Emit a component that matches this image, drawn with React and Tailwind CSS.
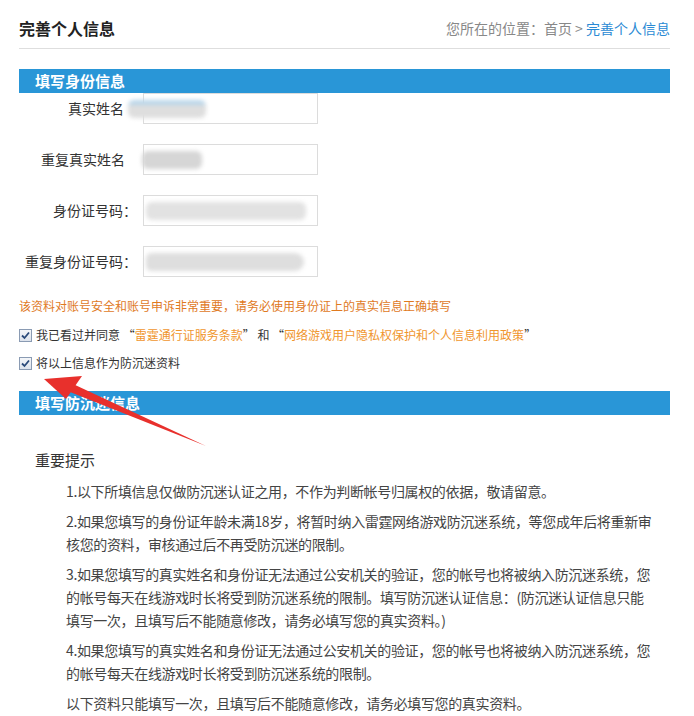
import React from "react";

const font = { fontFamily: '"Noto Sans CJK SC", "Noto Sans", sans-serif' };

function Check() {
  return (
    <span className="inline-flex h-[13px] w-[13px] shrink-0 items-center justify-center border border-[#8a9bb3] bg-gradient-to-b from-[#f4f6f9] to-[#dde3ec]">
      <svg width="9" height="9" viewBox="0 0 9 9">
        <path d="M1 4.5 L3.5 7 L8 1.5" fill="none" stroke="#2a4a7a" strokeWidth="1.8" />
      </svg>
    </span>
  );
}

function Blur({ w, tone = "#d6d6d6", extra = "" }) {
  return <div className={`h-[18px] rounded-[6px] blur-[2px] ${extra}`} style={{ width: w, background: tone }} />;
}

function Row({ label, blur, pad = "pr-[6px]" }) {
  return (
    <div className="flex h-[31px] items-center">
      <div className={`w-[124px] text-right text-[14px] text-[#333] ${pad}`}>{label}</div>
      <div className="flex h-[31px] w-[175px] items-center border border-[#dcdcdc] bg-white pl-[2px]">{blur}</div>
    </div>
  );
}

export default function App() {
  return (
    <div className="relative min-h-[716px] w-[694px] bg-white pl-[19px] pr-[24px]" style={font}>
      {/* header */}
      <div className="flex h-[49px] items-center justify-between border-b border-[#dedede] pt-[8px]">
        <div className="text-[16px] font-bold text-[#222]">完善个人信息</div>
        <div className="text-[14px] text-[#888]">
          您所在的位置：首页 &gt; <span className="text-[#2a8ad4]">完善个人信息</span>
        </div>
      </div>

      <div className="mt-[20px] flex h-[24px] items-center bg-[#2996d7] pl-[16px] text-[15px] font-bold text-white">填写身份信息</div>

      <div className="flex flex-col gap-[20px]">
        <Row label="真实姓名" pad="pr-[19px]" blur={<Blur w={78} tone="linear-gradient(#b9d6ea 0 30%, #dedede 30%)" extra="-ml-[18px]" />} />
        <Row label="重复真实姓名" pad="pr-[18px]" blur={<Blur w={60} extra="-ml-[4px]" />} />
        <Row label="身份证号码：" blur={<Blur w={160} tone="#e2e2e2" />} />
        <Row label="重复身份证号码：" blur={<Blur w={158} tone="#dedede" extra="rounded-r-[10px]" />} />
      </div>

      <div className="mt-[21px] text-[12px] leading-[16px] text-[#e07a1f]">该资料对账号安全和账号申诉非常重要，请务必使用身份证上的真实信息正确填写</div>

      <div className="mt-[13px] flex items-center gap-[4px] text-[12px] leading-[16px] text-[#333]">
        <Check />
        <span>
          我已看过并同意 “<span className="text-[#f0962e]">雷霆通行证服务条款</span>” 和 “<span className="text-[#f0962e]">网络游戏用户隐私权保护和个人信息利用政策</span>”
        </span>
      </div>
      <div className="mt-[12px] flex items-center gap-[4px] text-[12px] leading-[16px] text-[#333]">
        <Check />
        <span>将以上信息作为防沉迷资料</span>
      </div>

      <div className="mt-[20px] flex h-[24px] items-center bg-[#2996d7] pl-[16px] text-[15px] font-bold text-white">填写防沉迷信息</div>

      <div className="mt-[35px] pl-[16px] text-[15px] leading-[20px] text-[#333]">重要提示</div>

      <div className="mt-[10px] flex flex-col gap-[7px] whitespace-nowrap pl-[47px] text-[14px] leading-[23px] tracking-[-0.35px] text-[#444]">
        <p>1.以下所填信息仅做防沉迷认证之用，不作为判断帐号归属权的依据，敬请留意。</p>
        <p>
          2.如果您填写的身份证年龄未满18岁，将暂时纳入雷霆网络游戏防沉迷系统，等您成年后将重新审
          <br />
          核您的资料，审核通过后不再受防沉迷的限制。
        </p>
        <p>
          3.如果您填写的真实姓名和身份证无法通过公安机关的验证，您的帐号也将被纳入防沉迷系统，您
          <br />
          的帐号每天在线游戏时长将受到防沉迷系统的限制。填写防沉迷认证信息：(防沉迷认证信息只能
          <br />
          填写一次，且填写后不能随意修改，请务必填写您的真实资料。)
        </p>
        <p>
          4.如果您填写的真实姓名和身份证无法通过公安机关的验证，您的帐号也将被纳入防沉迷系统，您
          <br />
          的帐号每天在线游戏时长将受到防沉迷系统的限制。
        </p>
        <p>以下资料只能填写一次，且填写后不能随意修改，请务必填写您的真实资料。</p>
      </div>

      {/* red arrow annotation */}
      <svg className="pointer-events-none absolute left-0 top-0" width="694" height="716">
        <path d="M206 446 L70 392 L73 384 Z" fill="#e8302c" />
        <path d="M44 379 L82 376 L66 399 Z" fill="#e8302c" />
      </svg>
    </div>
  );
}
